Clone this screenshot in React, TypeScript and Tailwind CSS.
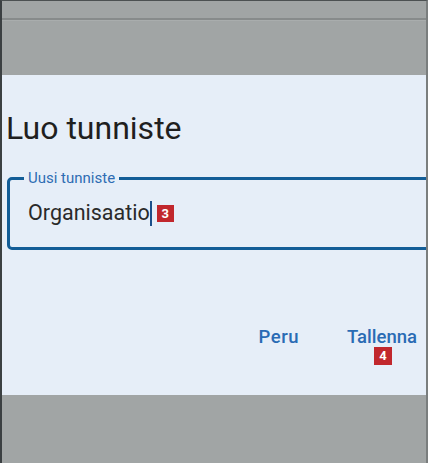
export default function App() {
  return (
    <div
      className="w-[428px] h-[463px] bg-[#a1a5a5] border-l-2 border-t border-r-2 border-l-[#3b4042] border-t-[#4c5152] border-r-[#7a7e7e] flex flex-col overflow-hidden"
      style={{ fontFamily: "Roboto, 'Noto Sans', sans-serif" }}
    >
      {/* top bar */}
      <div className="h-[17px] shrink-0" />
      <div className="h-[2px] shrink-0 bg-[#878b8b]" />
      <div className="h-[1px] shrink-0 bg-[#a9adad]" />
      <div className="h-[54px] shrink-0" />

      {/* dialog */}
      <div className="h-[320px] shrink-0 bg-[#e6eef8] overflow-hidden flex flex-col pt-[35px] pl-[4px]">
        <h1 className="text-[32px] leading-[36px] text-[#1f1f1f] font-normal">Luo tunniste</h1>

        <fieldset className="mt-[24px] ml-[1px] w-[440px] border-[3px] border-[#125d97] rounded-[5px] pt-[13px] pb-[20px] pl-[18px]">
          <legend className="ml-[-4px] px-[4px] text-[15px] leading-[16px] text-[#2e6cb3]">Uusi tunniste</legend>
          <div className="flex items-center h-[28px]">
            <span className="text-[21.5px] leading-[28px] text-[#2a2a2a]">Organisaatio</span>
            <span className="w-[2px] h-[25px] bg-[#1b4f8a]" />
            <span className="ml-[5px] w-[17px] h-[17px] bg-[#c1272d] text-white text-[13px] leading-[17px] font-bold flex items-center justify-center">
              3
            </span>
          </div>
        </fieldset>

        <div className="mt-[75px] flex justify-end items-start pr-[9px] gap-[48px]">
          <button className="text-[18.5px] leading-[24px] font-medium text-[#2a6bb4] tracking-[0.5px]">Peru</button>
          <div className="flex flex-col items-center">
            <button className="text-[18.5px] leading-[24px] font-medium text-[#2a6bb4]">Tallenna</button>
            <span className="mt-[-2px] ml-[2px] w-[18px] h-[18px] bg-[#c1272d] text-white text-[13px] leading-[18px] font-bold flex items-center justify-center">
              4
            </span>
          </div>
        </div>
      </div>
    </div>
  );
}
